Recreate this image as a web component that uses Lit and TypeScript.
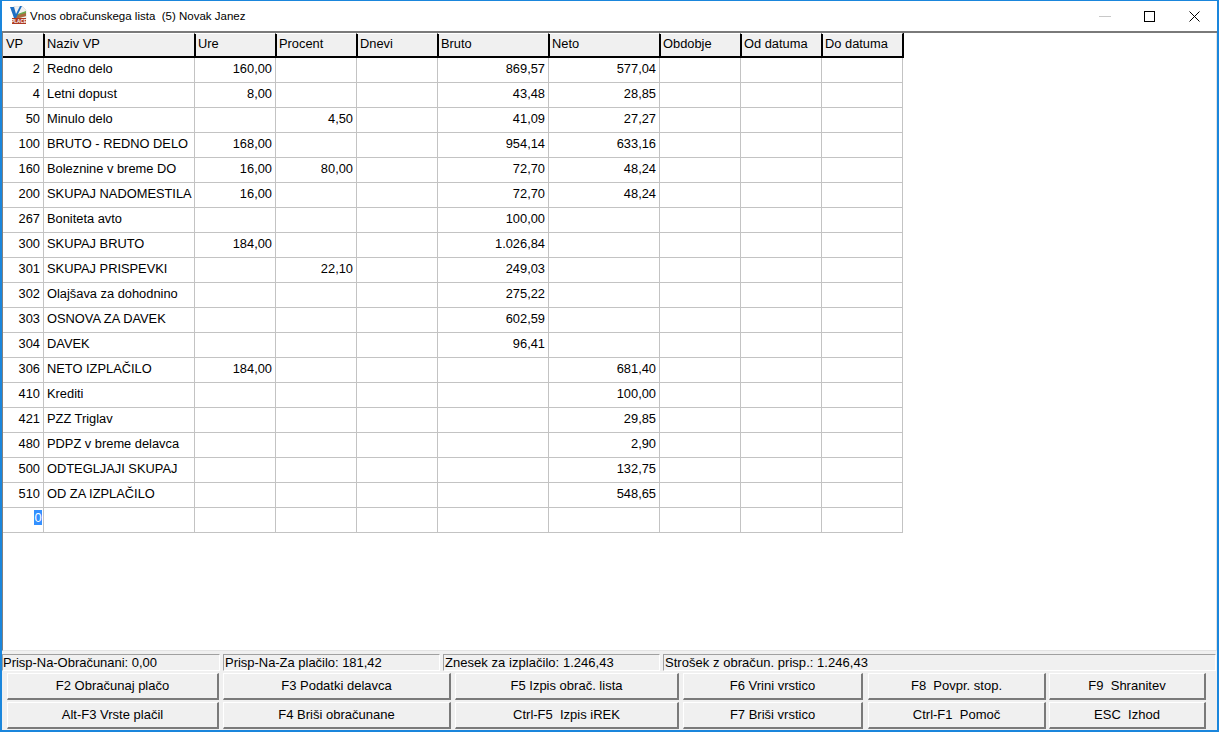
import { LitElement, html, css } from "lit";
import { customElement } from "lit/decorators.js";

const cols = [41, 151, 81, 81, 81, 111, 111, 81, 81, 81];
const heads = ["VP", "Naziv VP", "Ure", "Procent", "Dnevi", "Bruto", "Neto", "Obdobje", "Od datuma", "Do datuma"];
const rows: string[][] = [
  ["2", "Redno delo", "160,00", "", "", "869,57", "577,04"],
  ["4", "Letni dopust", "8,00", "", "", "43,48", "28,85"],
  ["50", "Minulo delo", "", "4,50", "", "41,09", "27,27"],
  ["100", "BRUTO - REDNO DELO", "168,00", "", "", "954,14", "633,16"],
  ["160", "Boleznine v breme DO", "16,00", "80,00", "", "72,70", "48,24"],
  ["200", "SKUPAJ NADOMESTILA", "16,00", "", "", "72,70", "48,24"],
  ["267", "Boniteta avto", "", "", "", "100,00", ""],
  ["300", "SKUPAJ BRUTO", "184,00", "", "", "1.026,84", ""],
  ["301", "SKUPAJ PRISPEVKI", "", "22,10", "", "249,03", ""],
  ["302", "Olajšava za dohodnino", "", "", "", "275,22", ""],
  ["303", "OSNOVA ZA DAVEK", "", "", "", "602,59", ""],
  ["304", "DAVEK", "", "", "", "96,41", ""],
  ["306", "NETO IZPLAČILO", "184,00", "", "", "", "681,40"],
  ["410", "Krediti", "", "", "", "", "100,00"],
  ["421", "PZZ Triglav", "", "", "", "", "29,85"],
  ["480", "PDPZ v breme delavca", "", "", "", "", "2,90"],
  ["500", "ODTEGLJAJI SKUPAJ", "", "", "", "", "132,75"],
  ["510", "OD ZA IZPLAČILO", "", "", "", "", "548,65"],
];
const status: [string, number][] = [
  ["Prisp-Na-Obračunani: 0,00", 218],
  ["Prisp-Na-Za plačilo: 181,42", 217],
  ["Znesek za izplačilo: 1.246,43", 217],
  ["Strošek z obračun. prisp.: 1.246,43", 553],
];
const btnW = [212, 228, 224, 180, 178, 157];
const btnGap = [4, 4, 4, 5, 3, 0];
const btn1 = ["F2 Obračunaj plačo", "F3 Podatki delavca", "F5 Izpis obrač. lista", "F6 Vrini vrstico", "F8  Povpr. stop.", "F9  Shranitev"];
const btn2 = ["Alt-F3 Vrste plačil", "F4 Briši obračunane", "Ctrl-F5  Izpis iREK", "F7 Briši vrstico", "Ctrl-F1  Pomoč", "ESC  Izhod"];

@customElement("app-root")
export class AppRoot extends LitElement {
  static styles = css`
    :host { display: block; width: 1219px; height: 732px; overflow: hidden; }
    * { box-sizing: border-box; }
    .win {
      width: 1219px; height: 732px; background: #f0f0f0;
      border: 2px solid #1a86dc; border-top-width: 1px;
      display: flex; flex-direction: column;
      font-family: "Liberation Sans", Arial, sans-serif; font-size: 13px; color: #000;
    }
    .title {
      height: 32px; flex: none; display: flex; align-items: center; padding-left: 7px;
      border-bottom: 2px solid #7a7a7a; background: #fff;
    }
    .title .cap { flex: 1; font-size: 11.5px; white-space: pre; padding: 0 0 1px 3px; }
    .title svg { display: block; flex: none; }
    .logo { margin-bottom: 2px; }
    .ctl { width: 45px; height: 30px; display: flex; align-items: center; justify-content: center; flex: none; }
    .main {
      flex: 1; min-height: 0; background: #fff;
      border-left: 1px solid #808080; border-right: 1px solid #e3e3e3; border-bottom: 1px solid #e3e3e3;
    }
    .grid { display: flex; flex-direction: column; width: max-content; font-size: 12.85px; }
    .r { display: flex; height: 25px; flex: none; }
    .c {
      flex: none; height: 25px; border-right: 1px solid #c3c3c3; border-bottom: 1px solid #c3c3c3;
      padding: 0 3px; line-height: 21px; overflow: hidden; white-space: pre;
    }
    .c.num { text-align: right; }
    .h { background: #f0f0f0; }
    .h .c {
      border-right: 1px solid #000; border-bottom: 2px solid #000; border-top: 1px solid #fff;
      box-shadow: 1px 0 0 #000; line-height: 19px; overflow: visible;
    }
    .sel {
      background: #3390ff; color: #fff; display: inline-block; height: 15px; line-height: 15px;
      width: 8px; margin-right: -2px; vertical-align: top; margin-top: 2px; text-align: center;
    }
    .bottom { flex: none; height: 79px; padding: 3px 0 1px; display: flex; flex-direction: column; }
    .status { display: flex; height: 17px; gap: 3px; flex: none; margin-bottom: 2px; }
    .s {
      flex: none; height: 17px; line-height: 15px; overflow: hidden; white-space: pre; letter-spacing: -.03px;
      border: 1px solid; border-color: #a0a0a0 #fff #fff #a0a0a0;
    }
    .s + .s { padding-left: 1px; }
    .s:nth-child(n + 3) { letter-spacing: .04px; }
    .btns { display: flex; height: 27px; flex: none; padding-left: 5px; margin-bottom: 2px; }
    .b {
      flex: none; height: 27px; text-align: center; line-height: 23px; white-space: pre; background: #f0f0f0;
      border-style: solid; border-width: 1px 2px 2px 1px; border-color: #fff #7a7a7a #7a7a7a #fff;
    }
  `;
  private btns(labels: string[]) {
    return html`<div class="btns">${labels.map((t, i) => html`<div class="b" style="width:${btnW[i]}px;margin-right:${btnGap[i]}px">${t}</div>`)}</div>`;
  }
  render() {
    return html`<div class="win">
      <div class="title">
        <svg class="logo" width="18" height="18" viewBox="0 0 18 18">
          <path d="M5 0h8l4 4v9H5z" fill="#f2f2f2" stroke="#cfcfcf" stroke-width=".5"/>
          <path d="M6 9l11-4v5l-11 3z" fill="#6aa84f"/>
          <path d="M7 9.5l10-2.5v3l-10 3z" fill="#c9503a" opacity=".7"/>
          <path d="M1 1h4l2 7 4-8h2l-6 12H5z" fill="#1d6fc4"/>
          <rect x="3" y="12" width="14" height="6" fill="#ad3a22"/>
          <text x="10" y="17" font-size="4.6" font-weight="700" text-anchor="middle" fill="#fff" font-family="Liberation Sans">PLACE</text>
        </svg>
        <span class="cap">Vnos obračunskega lista  (5) Novak Janez</span>
        <div class="ctl"><svg width="12" height="11" viewBox="0 0 12 11"><path d="M0 5.5h12" stroke="#c8c8c8" fill="none"/></svg></div>
        <div class="ctl"><svg width="11" height="11" viewBox="0 0 11 11"><rect x=".5" y=".5" width="10" height="10" stroke="#000" fill="none"/></svg></div>
        <div class="ctl"><svg width="11" height="11" viewBox="0 0 11 11"><path d="M.5.5l10 10M10.5.5l-10 10" stroke="#000" fill="none"/></svg></div>
      </div>
      <div class="main">
        <div class="grid">
          <div class="r h">${heads.map((t, i) => html`<div class="c" style="width:${cols[i]}px">${t}</div>`)}</div>
          ${rows.map((r) => html`<div class="r">${cols.map((w, i) => html`<div class="c ${i !== 1 ? "num" : ""}" style="width:${w}px">${r[i] ?? ""}</div>`)}</div>`)}
          <div class="r">${cols.map((w, i) => html`<div class="c ${i !== 1 ? "num" : ""}" style="width:${w}px">${i === 0 ? html`<span class="sel">0</span>` : ""}</div>`)}</div>
        </div>
      </div>
      <div class="bottom">
        <div class="status">${status.map(([t, w]) => html`<div class="s" style="width:${w}px">${t}</div>`)}</div>
        ${this.btns(btn1)}
        ${this.btns(btn2)}
      </div>
    </div>`;
  }
}
